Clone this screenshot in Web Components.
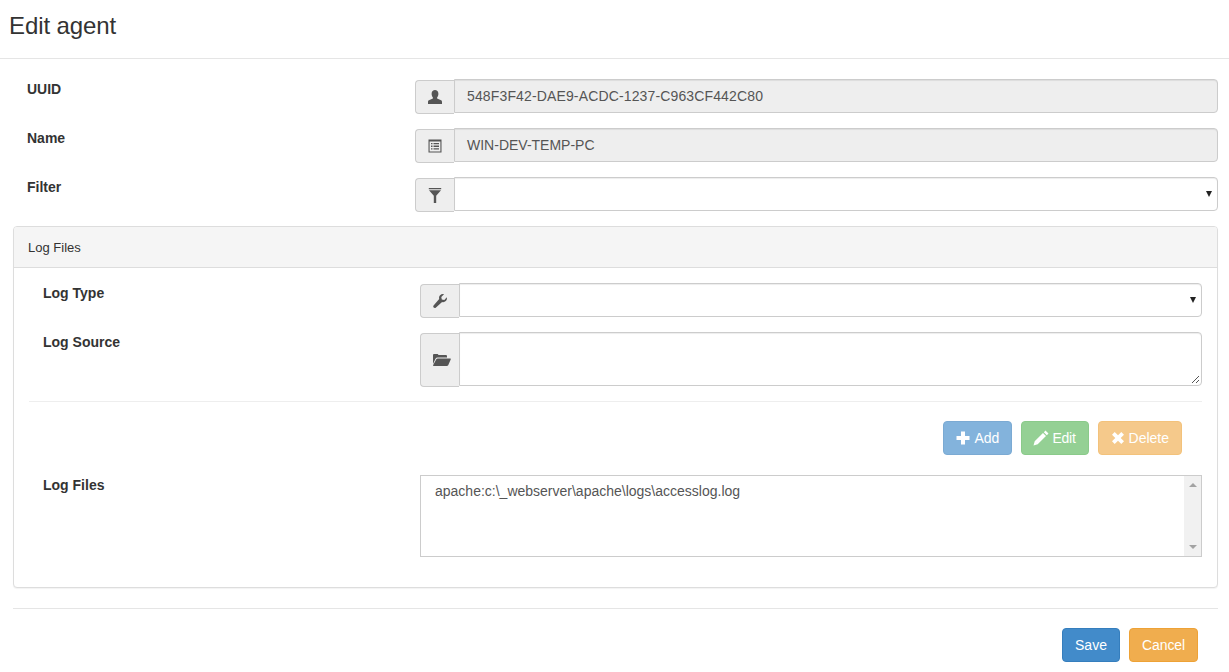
<!DOCTYPE html>
<html>
<head>
<meta charset="utf-8">
<title>Edit agent</title>
<style>
  html, body { margin: 0; padding: 0; background: #fff; }
  body { font-family: "Liberation Sans", Arial, sans-serif; font-size: 14px; color: #333; }
</style>
</head>
<body>
<template id="icons">
  <svg data-i="user" viewBox="0 0 14 14"><path d="M7 0C5.200 0 3.600 1.200 3.600 3.800c0 1.500.5 2.800 1.300 3.600v1.200L.9 10.300C.2 10.600 0 11.200 0 12.300V14h14v-1.700c0-1.100-.2-1.700-.9-2L9.100 8.600V7.400c.8-.8 1.300-2.100 1.300-3.600C10.400 1.200 8.800 0 7 0z"/></svg>
  <svg data-i="list" viewBox="0 0 14 14"><path fill-rule="evenodd" d="M.5 .5h13v13H.5zM1.600 2.600v9.800h10.800V2.600zM3 4h1.500v1.300H3zM5.500 4H11v1.300H5.500zM3 6.600h1.500v1.300H3zM5.500 6.600H11v1.300H5.500zM3 9.200h1.500v1.300H3zM5.500 9.200H11v1.300H5.500z"/></svg>
  <svg data-i="filter" viewBox="0 0 14 14"><path d="M.8 0h12.400v1.200H.8zM1 2.200h12L8.200 7.800V15H5.800V7.800z"/></svg>
  <svg data-i="wrench" viewBox="0 0 14 14"><path d="M13.800 3.200c.4 1.500 0 2.900-1 3.900-1 1-2.400 1.300-3.700.9L3 13.500c-.7.700-1.700.7-2.300.1s-.6-1.600.1-2.300L6.200 5c-.4-1.300-.1-2.800.9-3.800C8.100.2 9.500-.2 11 .2L8.300 2.900l.5 2.600 2.500.5z"/></svg>
  <svg data-i="folder" viewBox="0 0 18 14"><path d="M0 11V2.200C0 1.500.5 1 1.200 1h3c.6 0 1.100.4 1.200 1h7.400c.7 0 1.200.5 1.200 1.200V4.500H4.500c-.9 0-1.500.4-2 1.200zM3.300 6.300c.3-.5.800-.8 1.400-.8h12.300c.7 0 1 .5.700 1.100l-2.500 5.600c-.3.500-.8.800-1.400.8H.9c-.7 0-1-.5-.7-1.100z"/></svg>
  <svg data-i="plus" viewBox="0 0 14 14"><path d="M5 .5h4V5h4.500v4H9v4.500H5V9H.5V5H5z"/></svg>
  <svg data-i="pencil" viewBox="0 0 14 14"><path d="M11.500 -.5l3 3-1.700 1.700-3-3zM9 2l3 3-8.300 8.300L-.5 14.500l1.200-4.200z"/></svg>
  <svg data-i="times" viewBox="0 0 14 14"><path d="M3.700 1L7 4.300 10.300 1 13 3.700 9.700 7 13 10.300 10.300 13 7 9.700 3.700 13 1 10.300 4.300 7 1 3.700z"/></svg>
</template>

<script>
const iconTpl = document.getElementById('icons');

class UiIcon extends HTMLElement {
  constructor() {
    super();
    this.attachShadow({ mode: 'open' });
  }
  connectedCallback() {
    const src = iconTpl.content.querySelector(`[data-i="${this.getAttribute('name')}"]`);
    this.shadowRoot.innerHTML = `<style>
      :host { display: inline-flex; flex: none; width: 14px; height: 14px; }
      :host([name=folder]) { width: 18px; margin-left: 4px; }
      svg { width: 100%; height: 100%; fill: currentColor; display: block; overflow: visible; }
    </style>`;
    this.shadowRoot.appendChild(src.cloneNode(true));
  }
}

class PageHeader extends HTMLElement {
  constructor() {
    super();
    this.attachShadow({ mode: 'open' });
    this.shadowRoot.innerHTML = `<style>
      :host { display: block; height: 58px; border-bottom: 1px solid #e5e5e5; }
      h4 { margin: 0; padding: 11px 9px 0; font: 400 24px/30px "Liberation Sans", Arial, sans-serif; letter-spacing: -.1px; color: #333; }
    </style><h4><slot></slot></h4>`;
  }
}

class FormRow extends HTMLElement {
  constructor() {
    super();
    this.attachShadow({ mode: 'open' });
    this.shadowRoot.innerHTML = `<style>
      :host { display: grid; grid-template-columns: var(--label-w, 402px) 1fr; }
      label { font-weight: 700; font-size: 14px; line-height: 20px; color: #333; padding-left: 14px; }
    </style><label></label><div><slot></slot></div>`;
  }
  connectedCallback() {
    this.shadowRoot.querySelector('label').textContent = this.getAttribute('label');
  }
}

class InputGroup extends HTMLElement {
  constructor() {
    super();
    this.attachShadow({ mode: 'open' });
    this.shadowRoot.innerHTML = `<style>
      :host { display: flex; align-items: stretch; }
      .addon { flex: none; width: 38px; display: flex; align-items: center; justify-content: center;
        background: #eee; border: 1px solid #ccc; border-right: 0; border-radius: 4px 0 0 4px; color: #555;
        margin-top: 1px; margin-bottom: -1px; }
      .field { flex: 1; min-width: 0; display: flex; }
    </style><span class="addon"><slot name="icon"></slot></span><div class="field"><slot></slot></div>`;
  }
}

class TextControl extends HTMLElement {
  constructor() {
    super();
    this.attachShadow({ mode: 'open' });
    this.shadowRoot.innerHTML = `<style>
      :host { display: flex; flex: 1; align-items: center; box-sizing: border-box; height: 34px; padding: 0 12px;
        background: #eee; border: 1px solid #ccc; border-radius: 0 4px 4px 0; font-size: 14px; color: #555;
        box-shadow: inset 0 1px 1px rgba(0,0,0,.075); }
    </style><slot></slot>`;
  }
}

class SelectControl extends HTMLElement {
  constructor() {
    super();
    this.attachShadow({ mode: 'open' });
    this.shadowRoot.innerHTML = `<style>
      :host { display: flex; flex: 1; align-items: center; justify-content: flex-end; box-sizing: border-box; height: 34px; padding-right: 5px;
        background: #fff; border: 1px solid #ccc; border-radius: 0 4px 4px 0;
        box-shadow: inset 0 1px 1px rgba(0,0,0,.075); }
      i { width: 0; height: 0; border-left: 3.500px solid transparent; border-right: 3.500px solid transparent; border-top: 6px solid #222; }
    </style><i></i>`;
  }
}

class TextareaControl extends HTMLElement {
  constructor() {
    super();
    this.attachShadow({ mode: 'open' });
    this.shadowRoot.innerHTML = `<style>
      :host { display: block; flex: 1; position: relative; box-sizing: border-box; height: 54px;
        background: #fff; border: 1px solid #ccc; border-radius: 0 4px 4px 0; box-shadow: inset 0 1px 1px rgba(0,0,0,.075); }
      svg { position: absolute; right: 1px; bottom: 1px; width: 10px; height: 10px; stroke: #555; stroke-width: 1; }
    </style><svg viewBox="0 0 10 10"><path d="M9 2L2 9M9 6L6 9"/></svg>`;
  }
}

class PanelBox extends HTMLElement {
  constructor() {
    super();
    this.attachShadow({ mode: 'open' });
    this.shadowRoot.innerHTML = `<style>
      :host { display: block; border: 1px solid #ddd; border-radius: 4px; box-shadow: 0 1px 1px rgba(0,0,0,.05); background: #fff; }
      header { height: 41px; box-sizing: border-box; padding: 1px 14px 0; line-height: 40px; background: #f5f5f5; border-bottom: 1px solid #ddd;
        border-radius: 3px 3px 0 0; font-size: 13px; color: #333; }
      .body { padding: 15px 15px 30px; }
    </style><header></header><div class="body"><slot></slot></div>`;
  }
  connectedCallback() {
    this.shadowRoot.querySelector('header').textContent = this.getAttribute('heading');
  }
}

class UiButton extends HTMLElement {
  constructor() {
    super();
    this.attachShadow({ mode: 'open' });
    this.shadowRoot.innerHTML = `<style>
      :host { display: inline-flex; align-items: center; justify-content: center; gap: 4px; box-sizing: border-box; height: 34px;
        padding: 0 12px; border: 1px solid transparent; border-radius: 4px; font-size: 14px; color: #fff; }
      :host([kind=primary]) { background: #428bca; border-color: #357ebd; }
      :host([kind=success]) { background: #5cb85c; border-color: #4cae4c; }
      :host([kind=warning]) { background: #f0ad4e; border-color: #eea236; }
      :host([disabled]) { opacity: .65; }
    </style><slot></slot>`;
  }
}

class LogList extends HTMLElement {
  constructor() {
    super();
    this.attachShadow({ mode: 'open' });
    this.shadowRoot.innerHTML = `<style>
      :host { display: flex; box-sizing: border-box; height: 82px; border: 1px solid #ccc; background: #fff; font-size: 14px; color: #555; }
      .text { flex: 1; padding: 6px 14px; line-height: 18px; }
      .bar { flex: none; width: 17px; background: #f1f1f1; display: flex; flex-direction: column; justify-content: space-between; align-items: center; padding: 7px 0; }
      .bar i { width: 0; height: 0; border-left: 4px solid transparent; border-right: 4px solid transparent; }
      .up { border-bottom: 4px solid #a3a3a3; }
      .down { border-top: 4px solid #a3a3a3; }
    </style><div class="text"><slot></slot></div><div class="bar"><i class="up"></i><i class="down"></i></div>`;
  }
}

class FormStack extends HTMLElement {
  constructor() {
    super();
    this.attachShadow({ mode: 'open' });
    this.shadowRoot.innerHTML = `<style>
      :host { display: flex; flex-direction: column; gap: 15px; }
    </style><slot></slot>`;
  }
}

class ButtonBar extends HTMLElement {
  constructor() {
    super();
    this.attachShadow({ mode: 'open' });
    this.shadowRoot.innerHTML = `<style>
      :host { display: flex; justify-content: flex-end; gap: 9px; padding-right: 20px; }
    </style><slot></slot>`;
  }
}

class EditAgentPage extends HTMLElement {
  constructor() {
    super();
    this.attachShadow({ mode: 'open' });
    this.shadowRoot.innerHTML = `<style>
      :host { display: block; padding: 20px 11px 0 13px; }
      .rows { margin-bottom: 15px; }
      hr { border: 0; border-top: 1px solid #e5e5e5; margin: 20px 0 0; }
      .footer { padding-top: 19px; }
    </style>
    <form-stack class="rows"><slot name="top"></slot></form-stack>
    <slot name="panel"></slot>
    <hr>
    <button-bar class="footer"><slot name="footer"></slot></button-bar>`;
  }
}

customElements.define('ui-icon', UiIcon);
customElements.define('page-header', PageHeader);
customElements.define('form-row', FormRow);
customElements.define('input-group', InputGroup);
customElements.define('text-control', TextControl);
customElements.define('select-control', SelectControl);
customElements.define('textarea-control', TextareaControl);
customElements.define('panel-box', PanelBox);
customElements.define('ui-button', UiButton);
customElements.define('log-list', LogList);
customElements.define('form-stack', FormStack);
customElements.define('button-bar', ButtonBar);
customElements.define('edit-agent-page', EditAgentPage);
</script>

<page-header>Edit agent</page-header>
<edit-agent-page>
  <form-row slot="top" label="UUID"><input-group><ui-icon slot="icon" name="user"></ui-icon><text-control style="letter-spacing:.14px">548F3F42-DAE9-ACDC-1237-C963CF442C80</text-control></input-group></form-row>
  <form-row slot="top" label="Name"><input-group><ui-icon slot="icon" name="list"></ui-icon><text-control>WIN-DEV-TEMP-PC</text-control></input-group></form-row>
  <form-row slot="top" label="Filter"><input-group><ui-icon slot="icon" name="filter"></ui-icon><select-control></select-control></input-group></form-row>
  <panel-box slot="panel" heading="Log Files">
    <form-stack style="--label-w:391px">
      <form-row label="Log Type"><input-group><ui-icon slot="icon" name="wrench"></ui-icon><select-control></select-control></input-group></form-row>
      <form-row label="Log Source"><input-group><ui-icon slot="icon" name="folder"></ui-icon><textarea-control></textarea-control></input-group></form-row>
    </form-stack>
    <hr style="border:0;border-top:1px solid #eee;margin:15px 0 19px">
    <button-bar style="margin-bottom:20px">
      <ui-button kind="primary" disabled><ui-icon name="plus"></ui-icon>Add</ui-button>
      <ui-button kind="success" disabled style="letter-spacing:-.25px"><ui-icon name="pencil"></ui-icon>Edit</ui-button>
      <ui-button kind="warning" disabled><ui-icon name="times"></ui-icon>Delete</ui-button>
    </button-bar>
    <form-row label="Log Files" style="--label-w:391px"><log-list>apache:c:\_webserver\apache\logs\accesslog.log</log-list></form-row>
  </panel-box>
  <ui-button slot="footer" kind="primary" style="width:58px">Save</ui-button>
  <ui-button slot="footer" kind="warning" style="width:69px;letter-spacing:-.12px">Cancel</ui-button>
</edit-agent-page>
</body>
</html>
